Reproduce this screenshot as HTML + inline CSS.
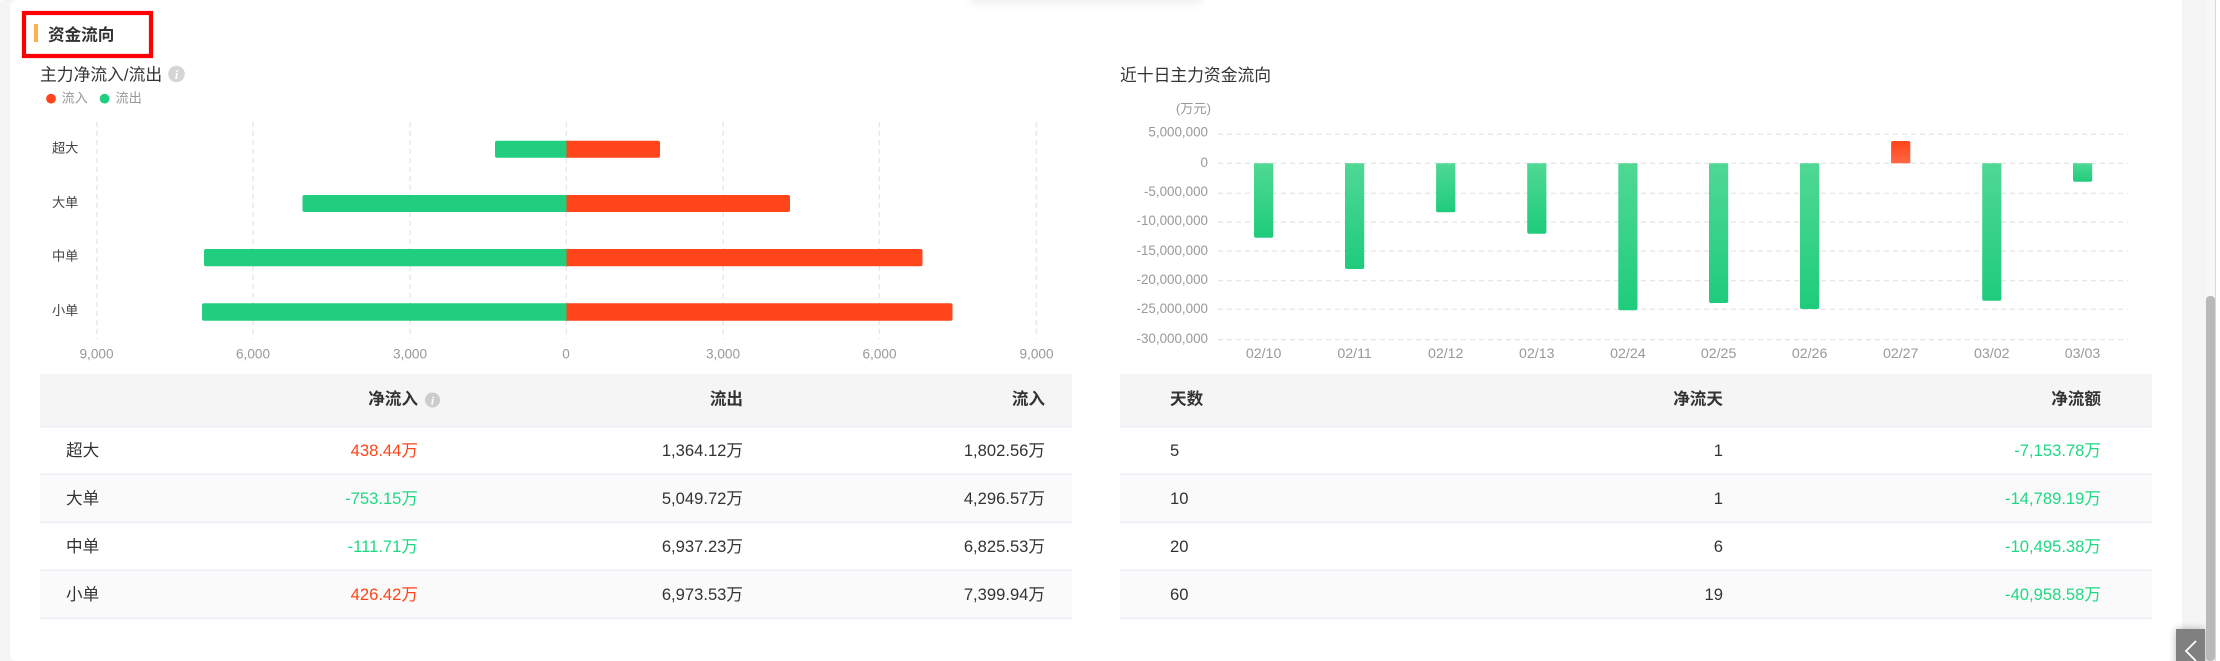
<!DOCTYPE html>
<html lang="zh-CN"><head><meta charset="utf-8"><title>资金流向</title>
<style>
html,body{margin:0;padding:0;width:2220px;height:661px;overflow:hidden;background:#fff}
svg{position:absolute;left:0;top:0;display:block}
text{font-family:"Liberation Sans","Noto Sans CJK SC",sans-serif;dominant-baseline:central}
.cjk{font-family:"Noto Sans CJK SC","Liberation Sans",sans-serif}
.t{font-size:16.6px;fill:#333}
.th{font-size:16.6px;font-weight:700;fill:#333}
.r{text-anchor:end}
.red{fill:#ff4519}.grn{fill:#1fd883}
.ax{font-size:13.4px;fill:#999}
.axl{font-size:13.6px;fill:#999}
.axd{font-size:14.2px;fill:#999}
.m{text-anchor:middle}
.lb{font-size:13.2px;fill:#444}
.gl{stroke:#e8e8e8;stroke-width:1.4;stroke-dasharray:5 4;fill:none}
</style></head><body>
<svg width="2220" height="661" viewBox="0 0 2220 661" xmlns="http://www.w3.org/2000/svg">
<defs>
<linearGradient id="g" x1="0" y1="0" x2="0" y2="1"><stop offset="0" stop-color="#4fd894"/><stop offset="1" stop-color="#1fcc7c"/></linearGradient>
<linearGradient id="rg" x1="0" y1="0" x2="0" y2="1"><stop offset="0" stop-color="#ff4519"/><stop offset="1" stop-color="#ff6643"/></linearGradient>
<filter id="sh" x="-20%" y="-200%" width="140%" height="500%"><feGaussianBlur stdDeviation="5"/></filter>
<filter id="sh2" x="-50%" y="-50%" width="200%" height="200%"><feGaussianBlur stdDeviation="4"/></filter>
</defs>

<!-- page background and card -->
<rect x="0" y="0" width="2220" height="661" fill="#f5f5f5"/>
<path d="M18 0H2182V661H18Q10 661 10 653V8Q10 0 18 0Z" fill="#fff"/>
<path d="M0 0H4Q0 0 0 4Z" fill="#fff"/>
<rect x="2207" y="0" width="13" height="661" fill="#f8f8f8"/>
<rect x="2215" y="0" width="5" height="661" fill="#fff"/>
<rect x="2215" y="0" width="1" height="661" fill="#d8d8d8"/>

<!-- top shadow -->
<rect x="970" y="-12" width="232" height="15" fill="#000" opacity=".07" filter="url(#sh)"/>

<!-- section title -->
<rect x="24" y="13" width="127" height="43" fill="none" stroke="#ff0000" stroke-width="4.2"/>
<rect x="34" y="24" width="4" height="18" fill="#ffb04a"/>
<text x="48" y="33.500" class="cjk" font-size="16.6" font-weight="700" fill="#333">资金流向</text>

<!-- left heading -->
<text x="40" y="75" font-size="16.8" fill="#333">主力净流入/流出</text>
<circle cx="176.500" cy="74" r="8.300" fill="#d5d5d5"/>
<text x="176.500" y="74.500" class="m" font-size="13" font-style="italic" font-weight="700" fill="#fff" style="font-family:'Liberation Serif',serif">i</text>
<circle cx="51" cy="98.700" r="4.900" fill="#ff4519"/>
<text x="61.500" y="98" font-size="13.200" fill="#999">流入</text>
<circle cx="104.600" cy="98.700" r="4.900" fill="#21ce7f"/>
<text x="115.500" y="98" font-size="13.200" fill="#999">流出</text>

<!-- left chart grid -->
<path class="gl" d="M96.800 122V339M253 122V339M410 122V339M566.300 122V339M723.200 122V339M879.300 122V339M1036.400 122V339"/>
<!-- left chart bars -->
<g fill="#21ce7f">
<rect x="495" y="140.700" width="75" height="17" rx="2"/>
<rect x="302.500" y="195" width="268" height="17" rx="2"/>
<rect x="204" y="249" width="366" height="17.300" rx="2"/>
<rect x="202" y="303.300" width="368" height="17.400" rx="2"/>
</g>
<g fill="#ff4519">
<path d="M566.500 140.700H658a2 2 0 0 1 2 2V155.700a2 2 0 0 1-2 2H566.500Z"/>
<path d="M566.500 195H788a2 2 0 0 1 2 2V210a2 2 0 0 1-2 2H566.500Z"/>
<path d="M566.500 249H920.500a2 2 0 0 1 2 2V264.300a2 2 0 0 1-2 2H566.500Z"/>
<path d="M566.500 303.300H950.500a2 2 0 0 1 2 2V318.700a2 2 0 0 1-2 2H566.500Z"/>
</g>
<text x="52" y="148" class="lb">超大</text>
<text x="52" y="202.300" class="lb">大单</text>
<text x="52" y="256" class="lb">中单</text>
<text x="52" y="310.700" class="lb">小单</text>
<text class="axl m" x="96.500" y="354">9,000</text>
<text class="axl m" x="253" y="354">6,000</text>
<text class="axl m" x="410" y="354">3,000</text>
<text class="axl m" x="566" y="354">0</text>
<text class="axl m" x="723" y="354">3,000</text>
<text class="axl m" x="879.500" y="354">6,000</text>
<text class="axl m" x="1036.500" y="354">9,000</text>

<!-- right heading -->
<text x="1120" y="75.300" font-size="16.800" fill="#333">近十日主力资金流向</text>
<text x="1211" y="108.700" class="r" font-size="13.200" fill="#999">(万元)</text>
<!-- right chart grid -->
<path class="gl" d="M1218 134.300H2128M1218 163.300H2128M1218 193.300H2128M1218 222H2128M1218 251H2128M1218 280.700H2128M1218 309.300H2128M1218 339.700H2128"/>
<g>
<text class="ax r" x="1208" y="132">5,000,000</text>
<text class="ax r" x="1208" y="162.300">0</text>
<text class="ax r" x="1208" y="191.300">-5,000,000</text>
<text class="ax r" x="1208" y="220.300">-10,000,000</text>
<text class="ax r" x="1208" y="250.300">-15,000,000</text>
<text class="ax r" x="1208" y="279.300">-20,000,000</text>
<text class="ax r" x="1208" y="308.300">-25,000,000</text>
<text class="ax r" x="1208" y="338.300">-30,000,000</text>
</g>
<!-- right chart bars -->
<g fill="url(#g)">
<path d="M1254 163.300H1273.200V235.700a2 2 0 0 1-2 2H1256a2 2 0 0 1-2-2Z"/>
<path d="M1345 163.300H1364.200V267a2 2 0 0 1-2 2H1347a2 2 0 0 1-2-2Z"/>
<path d="M1436.100 163.300H1455.300V210.300a2 2 0 0 1-2 2H1438.100a2 2 0 0 1-2-2Z"/>
<path d="M1527.200 163.300H1546.400V231.700a2 2 0 0 1-2 2H1529.200a2 2 0 0 1-2-2Z"/>
<path d="M1618.300 163.300H1637.500V308.300a2 2 0 0 1-2 2H1620.300a2 2 0 0 1-2-2Z"/>
<path d="M1709 163.300H1728.200V301a2 2 0 0 1-2 2H1711a2 2 0 0 1-2-2Z"/>
<path d="M1800 163.300H1819.200V307a2 2 0 0 1-2 2H1802a2 2 0 0 1-2-2Z"/>
<path d="M1982.200 163.300H2001.400V298.700a2 2 0 0 1-2 2H1984.200a2 2 0 0 1-2-2Z"/>
<path d="M2073 163.300H2092.200V179.700a2 2 0 0 1-2 2H2075a2 2 0 0 1-2-2Z"/>
</g>
<path d="M1891.100 163.300V143a2 2 0 0 1 2-2H1908.300a2 2 0 0 1 2 2V163.300Z" fill="url(#rg)"/>
<text class="axd m" x="1263.600" y="354">02/10</text>
<text class="axd m" x="1354.600" y="354">02/11</text>
<text class="axd m" x="1445.700" y="354">02/12</text>
<text class="axd m" x="1536.800" y="354">02/13</text>
<text class="axd m" x="1627.900" y="354">02/24</text>
<text class="axd m" x="1718.600" y="354">02/25</text>
<text class="axd m" x="1809.600" y="354">02/26</text>
<text class="axd m" x="1900.700" y="354">02/27</text>
<text class="axd m" x="1991.800" y="354">03/02</text>
<text class="axd m" x="2082.500" y="354">03/03</text>

<!-- left table -->
<rect x="40" y="374" width="1032" height="52" fill="#f5f5f5"/>
<rect x="40" y="474.600" width="1032" height="47" fill="#fafafa"/>
<rect x="40" y="570.600" width="1032" height="47" fill="#fafafa"/>
<path d="M40 426.700H1072M40 474.300H1072M40 522.300H1072M40 570.300H1072M40 618.300H1072" stroke="#eeeef6" stroke-width="1.500" fill="none"/>
<text class="th r" x="418" y="399">净流入</text>
<circle cx="432.500" cy="400" r="7.500" fill="#cccccc"/>
<text x="432.500" y="400.500" class="m" font-size="12" font-style="italic" font-weight="700" fill="#fff" style="font-family:'Liberation Serif',serif">i</text>
<text class="th r" x="743" y="399">流出</text>
<text class="th r" x="1045" y="399">流入</text>

<text class="t" x="66" y="450.300">超大</text>
<text class="t" x="66" y="498.300">大单</text>
<text class="t" x="66" y="546.300">中单</text>
<text class="t" x="66" y="594.300">小单</text>
<text class="t r red" x="418" y="450.300">438.44万</text>
<text class="t r grn" x="418" y="498.300">-753.15万</text>
<text class="t r grn" x="418" y="546.300">-111.71万</text>
<text class="t r red" x="418" y="594.300">426.42万</text>
<text class="t r" x="743" y="450.300">1,364.12万</text>
<text class="t r" x="743" y="498.300">5,049.72万</text>
<text class="t r" x="743" y="546.300">6,937.23万</text>
<text class="t r" x="743" y="594.300">6,973.53万</text>
<text class="t r" x="1045" y="450.300">1,802.56万</text>
<text class="t r" x="1045" y="498.300">4,296.57万</text>
<text class="t r" x="1045" y="546.300">6,825.53万</text>
<text class="t r" x="1045" y="594.300">7,399.94万</text>

<!-- right table -->
<rect x="1120" y="374" width="1032" height="52" fill="#f5f5f5"/>
<rect x="1120" y="474.600" width="1032" height="47" fill="#fafafa"/>
<rect x="1120" y="570.600" width="1032" height="47" fill="#fafafa"/>
<path d="M1120 426.700H2152M1120 474.300H2152M1120 522.300H2152M1120 570.300H2152M1120 618.300H2152" stroke="#eeeef6" stroke-width="1.500" fill="none"/>
<text class="th" x="1170" y="399">天数</text>
<text class="th r" x="1723" y="399">净流天</text>
<text class="th r" x="2101" y="399">净流额</text>
<text class="t" x="1170" y="450.300">5</text>
<text class="t" x="1170" y="498.300">10</text>
<text class="t" x="1170" y="546.300">20</text>
<text class="t" x="1170" y="594.300">60</text>
<text class="t r" x="1723" y="450.300">1</text>
<text class="t r" x="1723" y="498.300">1</text>
<text class="t r" x="1723" y="546.300">6</text>
<text class="t r" x="1723" y="594.300">19</text>
<text class="t r grn" x="2101" y="450.300">-7,153.78万</text>
<text class="t r grn" x="2101" y="498.300">-14,789.19万</text>
<text class="t r grn" x="2101" y="546.300">-10,495.38万</text>
<text class="t r grn" x="2101" y="594.300">-40,958.58万</text>

<!-- collapse button and scrollbar -->
<rect x="2176" y="629" width="29" height="40" fill="#000" opacity=".28" filter="url(#sh2)"/>
<rect x="2206" y="296" width="9" height="365" rx="4" fill="#b9b9b9"/>
<rect x="2176" y="629" width="29" height="32" fill="#808080"/>
<path d="M2196 641L2186 651L2196 661" fill="none" stroke="#fff" stroke-width="1.800"/>
</svg>
</body></html>
